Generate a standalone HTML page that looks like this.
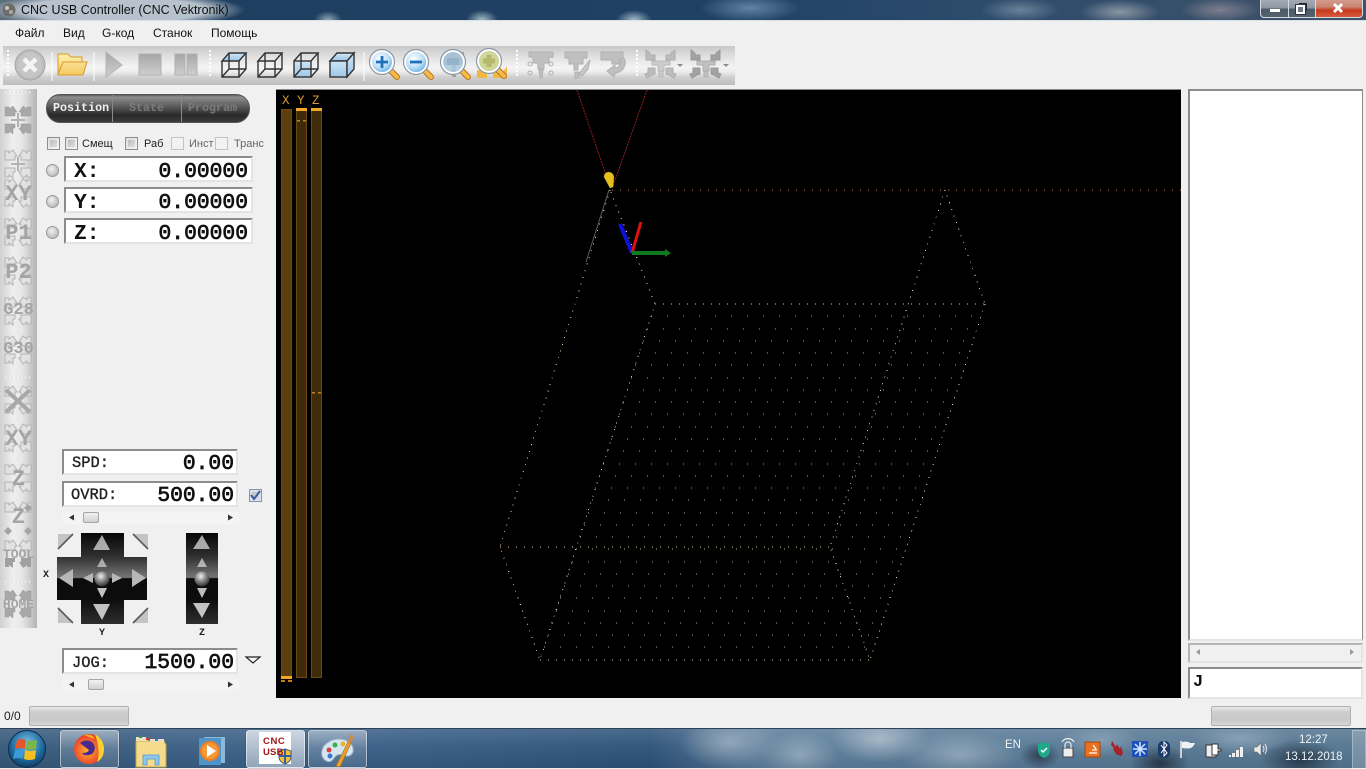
<!DOCTYPE html>
<html><head><meta charset="utf-8"><title>CNC USB Controller</title>
<style>
html,body{margin:0;padding:0;width:1366px;height:768px;overflow:hidden;background:#f0f0f0;font-family:"Liberation Sans","Noto Sans CJK SC",sans-serif}
div{position:absolute;box-sizing:border-box}
span{position:absolute;white-space:nowrap}
.abs{position:absolute;left:0;top:0}
#title{left:0;top:0;width:1366px;height:21px;border-bottom:1px solid #d8e0e8;background:
 radial-gradient(ellipse 130px 18px at 115px 10px,rgba(190,200,210,.95) 70%,rgba(190,200,210,0) 100%),
 radial-gradient(ellipse 14px 9px at 328px 20px,#90a9b6,rgba(144,169,182,0)),
 radial-gradient(ellipse 16px 10px at 482px 20px,#a5bcc4,rgba(165,188,196,0)),
 radial-gradient(ellipse 18px 10px at 634px 20px,#a3bbc6,rgba(163,187,198,0)),
 radial-gradient(ellipse 50px 14px at 750px 8px,#5f83a6,rgba(95,131,166,0)),
 radial-gradient(ellipse 40px 12px at 1020px 10px,#6a8098,rgba(106,128,152,0)),
 radial-gradient(ellipse 40px 12px at 1120px 12px,#8a96a4,rgba(138,150,164,0)),
 radial-gradient(ellipse 40px 12px at 1220px 10px,#7d7f8f,rgba(125,127,143,0)),
 linear-gradient(90deg,#5a6a78 0,#1f3f60 230px,#1f4164 700px,#2e4c6c 1000px,#3f5268 1366px)}
#t{left:21px;top:3px;font-size:12.5px;color:#111}
.m{top:26px;font-size:12px;color:#111}
#tb{left:3px;top:46px;width:732px;height:39px;background:linear-gradient(#c9c9c9 0,#e2e2e2 30%,#f4f4f4 55%,#ededed 66%,#cfcfcf 80%,#bdbdbd 100%)}
#strip{left:0;top:89px;width:37px;height:539px;background:linear-gradient(90deg,#d0d0d0 0,#efefef 35%,#e6e6e6 60%,#b4b4b4 100%)}
.sl{font:bold 22px "Liberation Mono",monospace;color:#a4a4a4;text-align:center;left:0;width:37px}
#pill{left:46px;top:94px;width:204px;height:29px;border-radius:14px;background:linear-gradient(#5e5e5e 0,#8e8e8e 8%,#565656 45%,#2a2a2a 75%,#3c3c3c 100%);border:1px solid #555;overflow:hidden}
#pill i{position:absolute;top:0;bottom:0;width:1px;background:#8a8a8a}
.pt{font:bold 11.7px "Liberation Mono",monospace;top:6px}
.cb{width:13px;height:13px;border:1px solid #8e8f8f;background:linear-gradient(135deg,#dcdcdc,#f6f6f6)}
.cb:after{content:"";position:absolute;left:2px;top:2px;width:7px;height:7px;background:linear-gradient(135deg,#bdbdbd,#dedede)}
.cb.d{border-color:#c4c4c4;background:#f2f2f2}.cb.d:after{display:none}
.lb{font-size:11px;top:138px;color:#222}
.ro{background:#fff;border-top:2px solid #8c8c8c;border-left:2px solid #8c8c8c;border-right:2px solid #e4e4e4;border-bottom:2px solid #e4e4e4;overflow:hidden}
.big{font:normal 21.3px/21px "Liberation Mono",monospace;color:#111;-webkit-text-stroke:.7px #111}
.bl{font-weight:bold;-webkit-text-stroke:0}
.sm{font:normal 15.4px/16px "Liberation Mono",monospace;color:#222;-webkit-text-stroke:.35px #222}
.rd{width:13px;height:13px;border-radius:50%;border:1px solid #999;background:radial-gradient(circle at 40% 35%,#f0f0f0,#c0c0c0 70%,#a8a8a8)}
.sb{background:#f4f4f4;height:12px}
.th{top:0;height:11px;width:16px;border:1px solid #a4a4a4;border-radius:2px;background:linear-gradient(#f2f2f2,#d0d0d0)}
.lt{font:bold 10px "Liberation Mono",monospace;color:#222}
#gl{left:276px;top:89px;width:905px;height:609px;background:#000;border-top:1px solid #8a8a8a}
.ax{font:12.5px "Liberation Mono",monospace;color:#d99b3a;top:94px}
#st{left:4px;top:709px;font-size:12px;color:#222}
.pb{height:20px;border:1px solid #b0b0b0;border-radius:2px;background:linear-gradient(#e8e8e8,#cdcdcd 30%,#c8c8c8 70%,#d8d8d8)}
#task{left:0;top:728px;width:1366px;height:40px;border-top:1px solid #2c4258;background:
 linear-gradient(rgba(255,255,255,.14),rgba(255,255,255,.04) 45%,rgba(0,0,0,.06)),
 radial-gradient(ellipse 50px 26px at 730px 14px,#8ba0b4,rgba(139,160,180,0)),
 radial-gradient(ellipse 40px 24px at 800px 26px,#8fa6b8,rgba(143,166,184,0)),
 radial-gradient(ellipse 50px 24px at 880px 10px,#a0b2c2,rgba(160,178,194,0)),
 radial-gradient(ellipse 60px 24px at 960px 26px,#8ea5b8,rgba(142,165,184,0)),
 radial-gradient(ellipse 20px 14px at 1040px 26px,#2a3c50,rgba(42,60,80,0)),
 radial-gradient(ellipse 40px 16px at 1100px 12px,#7a97ae,rgba(122,151,174,0)),
 radial-gradient(ellipse 30px 18px at 1160px 34px,#25384a,rgba(37,56,74,0)),
 radial-gradient(ellipse 50px 16px at 1240px 10px,#7c98b0,rgba(124,152,176,0)),
 radial-gradient(ellipse 40px 20px at 1300px 30px,#25384a,rgba(37,56,74,0)),
 linear-gradient(90deg,#36587a 0,#3a6088 300px,#2b5178 650px,#5b7d9b 760px,#53748f 1366px)}
.btn{top:1px;height:38px;width:59px;border:1px solid rgba(255,255,255,.55);border-radius:3px;background:linear-gradient(rgba(255,255,255,.42),rgba(255,255,255,.18) 50%,rgba(255,255,255,.1));box-shadow:0 0 1px #123}
.tr{color:#eef3f8;font-size:11.5px}
</style></head><body>

<div id="title">
<svg class="abs" width="20" height="20"><circle cx="9" cy="10" r="6.5" fill="#6d6d6a"/><circle cx="7" cy="8" r="2" fill="#c8c8c0"/><circle cx="11" cy="12" r="2" fill="#a8a8a0"/></svg>
<span id="t">CNC USB Controller (CNC Vektronik)</span>
<div style="left:1260px;top:0;width:103px;height:18px;border:1px solid #d4dbe2;border-top:0;border-radius:0 0 4px 4px;overflow:hidden;background:linear-gradient(#a3aab2,#8e98a3 45%,#4c5a68 55%,#55626f)">
 <div style="left:27px;top:0;width:1px;height:17px;background:#d4dbe2"></div>
 <div style="left:54px;top:0;width:1px;height:17px;background:#d4dbe2"></div>
 <div style="left:55px;top:0;width:47px;height:17px;background:linear-gradient(#d69a8a,#c98472 40%,#c53a1c 60%,#d75a3c)"></div>
 <div style="left:9px;top:9px;width:10px;height:3px;background:#fff"></div>
 <div style="left:38px;top:3px;width:8px;height:8px;border:1px solid #223;background:#e8e8e8"></div>
 <div style="left:35px;top:5px;width:9px;height:9px;border:2px solid #fff;outline:1px solid #334;background:#6b7885"></div>
 <svg class="abs" width="103" height="18"><path d="M73 4l8 8M81 4l-8 8" stroke="#fff" stroke-width="3"/></svg>
</div>
</div>

<span class="m" style="left:15px">Файл</span><span class="m" style="left:63px">Вид</span><span class="m" style="left:102px">G-код</span><span class="m" style="left:153px">Станок</span><span class="m" style="left:211px">Помощь</span>

<div id="tb"></div>
<svg class="abs" width="740" height="90">
<defs>
 <linearGradient id="fb" x1="0" y1="0" x2="0" y2="1"><stop offset="0" stop-color="#cfe6f7"/><stop offset="1" stop-color="#9cc6e8"/></linearGradient>
 <linearGradient id="fo" x1="0" y1="0" x2="0" y2="1"><stop offset="0" stop-color="#fff0b0"/><stop offset="1" stop-color="#f4c860"/></linearGradient>
 <radialGradient id="gl1" cx=".4" cy=".35" r=".7"><stop offset="0" stop-color="#ffffff"/><stop offset=".6" stop-color="#b9dcf6"/><stop offset="1" stop-color="#58a8e4"/></radialGradient>
 <linearGradient id="gs" x1="0" y1="0" x2="0" y2="1"><stop offset="0" stop-color="#a6a6a6"/><stop offset="1" stop-color="#cfcfcf"/></linearGradient>
 <g id="mg"><path d="M9 9L15 15" stroke="#b87a1c" stroke-width="6" stroke-linecap="round"/><path d="M9 9L15 15" stroke="#f6b94a" stroke-width="4" stroke-linecap="round"/></g>
</defs>
<g fill="none" stroke="#fff" stroke-width="1"><path d="M52 52v29M94 52v29M364 52v29"/></g>
<g stroke="#fff" stroke-width="2" stroke-dasharray="2 2"><path d="M8 50v27M210 50v27M517 50v27M637 50v27"/></g>
<circle cx="30" cy="65" r="15" fill="#bdbdbd" stroke="#a6a6a6" stroke-width="1"/><circle cx="30" cy="65" r="12.500" fill="#c6c6c6"/>
<path d="M24 59l12 12M36 59L24 71" stroke="#f4f4f4" stroke-width="4.500"/>
<path d="M58 74V54h10l3 3h11v5h5l-4 13H58z" fill="url(#fo)" stroke="#d49a2a"/><path d="M58 74l5-12h24" fill="none" stroke="#d49a2a"/>
<path d="M106 53l16 13-16 12z" fill="url(#gs)" stroke="#b4b4b4" transform="translate(0 -1)"/>
<rect x="139" y="54" width="22" height="21" fill="url(#gs)" stroke="#b0b0b0"/>
<rect x="175" y="54" width="10" height="21" fill="url(#gs)" stroke="#b0b0b0"/><rect x="187" y="54" width="10" height="21" fill="url(#gs)" stroke="#b0b0b0"/>
<g fill="none" stroke="#333" stroke-width="1.400">
 <path d="M222 61h17l7-8H229z" fill="url(#fb)"/><path d="M222 61v16h17V61M239 77l7-8V53M222 77l7-8h17M229 53v16"/>
 <path d="M258 61h17l7-8h-17zM258 61v16h17V61M275 77l7-8V53M258 77l7-8h17M265 53v16" />
 <rect x="294" y="61" width="17" height="16" fill="url(#fb)"/><path d="M294 61l7-8h17l-7 8M311 77l7-8V53M301 53v16h17M301 69l-7 8"/>
 <path d="M330 61h17l7-8h-17z" fill="url(#fb)"/><rect x="330" y="61" width="17" height="16" fill="url(#fb)"/><path d="M347 77l7-8V53l-7 8z" fill="url(#fb)"/>
</g>
<g transform="translate(382 62)"><use href="#mg"/><circle r="11" fill="url(#gl1)" stroke="#fff" stroke-width="2"/><circle r="12.500" fill="none" stroke="#8c98a4" stroke-width="1.200"/><path d="M-6 0h12M0-6v12" stroke="#1e70b8" stroke-width="2.800"/></g>
<g transform="translate(416 62)"><use href="#mg"/><circle r="11" fill="url(#gl1)" stroke="#fff" stroke-width="2"/><circle r="12.500" fill="none" stroke="#8c98a4" stroke-width="1.200"/><path d="M-6 0h12" stroke="#1e70b8" stroke-width="2.800"/></g>
<path d="M444 52h20v13h-20zM452 65h4v12h-4z" fill="#a4a4a4"/>
<g transform="translate(453 62)"><use href="#mg"/><circle r="11" fill="#a8c8de" fill-opacity=".85" stroke="#fff" stroke-width="2"/><circle r="12.500" fill="none" stroke="#8c98a4" stroke-width="1.200"/><path d="M-6-4h12v7H-6z" fill="#96b4c8"/></g>
<path d="M477 78v-8h10v8zM493 78v-6h10l4-6 0 12z" fill="#f4b840"/>
<g transform="translate(489 61)"><use href="#mg"/><circle r="11" fill="#cfd69a" stroke="#fff" stroke-width="2"/><circle r="12.500" fill="none" stroke="#8c98a4" stroke-width="1.200"/><path d="M-6 0h12M0-6v12" stroke="#b5b86a" stroke-width="5"/></g>
<g fill="#c0c0c0" stroke="#b0b0b0">
 <path d="M529 52h24v5h-4v6h-5v6h-6v-6h-5v-6h-4z M539 70h4l-1 8h-2z"/>
 <circle cx="530" cy="64" r="2" fill="none"/><circle cx="551" cy="64" r="2" fill="none"/><circle cx="530" cy="73" r="2" fill="none"/><circle cx="551" cy="73" r="2" fill="none"/>
 <path d="M565 52h22v6h-4v6h-5v6h-4v-6h-5v-6h-4z M575 72h4v6h-4z"/>
 <path d="M590 60l-5 6-6 8 3 2 6-7z" fill="#c8c8c8"/>
 <path d="M601 52h22v8h-4v4h-7v-4h-11z"/><path d="M624 58c3 4 1 14-9 15l-1 4-7-6 8-6v3c4 0 6-3 5-9z"/>
</g>
<g fill="#bcbcbc" stroke="#aeaeae">
 <path d="M646 50l4 3v2h5v5h-9zM675 50l-4 3v2h-5v5h9zM647 78l-2-4 3-1v-5h7v6l-3 1zM674 78l2-4-3-1v-5h-7v6l3 1z"/>
 <path d="M652 61h18v4h-6v6h-6v-6h-6zM659 71h4v6h-4z" fill="#cccccc" stroke="#b8b8b8"/>
</g>
<g fill="#a2a2a2" stroke="#989898" >
 <path d="M691 50l4 3v2h5v5h-9zM720 50l-4 3v2h-5v5h9zM692 78l-2-4 3-1v-5h7v6l-3 1zM719 78l2-4-3-1v-5h-7v6l3 1z"/>
 <path d="M697 61h18v4h-6v6h-6v-6h-6zM704 71h4v6h-4z" fill="#c0c0c0" stroke="#aeaeae"/>
</g>
<path d="M677 64h6l-3 3zM723 64h6l-3 3z" fill="#8e8e8e"/>
</svg>

<div id="strip"></div>
<svg class="abs" width="37" height="640">
<defs>
 <g id="af"><path d="M5-14l4 3v-2h4v9H3V-8H1zM-5-14l-4 3v-2h-4v9h10V-8h2zM5 14l4-3v2h4V4H3v4H1zM-5 14l-4-3v2h-4V4H-3v4h-2z" fill="#a8a8a8" stroke="#9a9a9a" stroke-width=".5"/></g>
 <g id="ao"><path d="M5-14l4 3v-2h4v9H3V-8H1zM-5-14l-4 3v-2h-4v9h10V-8h2zM5 14l4-3v2h4V4H3v4H1zM-5 14l-4-3v2h-4V4H-3v4h-2z" fill="#e2e2e2" stroke="#b4b4b4"/></g>
</defs>
<path d="M4 92.500h28M4 377.500h28M4 581.500h28" stroke="#fff" stroke-width="1.500" stroke-dasharray="2 2"/>
<path d="M4 92.500h28M4 377.500h28M4 581.500h28" stroke="#999" stroke-width=".6" stroke-dasharray="1 3"/>
<use href="#af" x="18" y="120"/><path d="M18 113v14M11 120h14" stroke="#b4b4b4" stroke-width="2"/>
<use href="#ao" x="18" y="164"/><path d="M18 157v14M11 164h14" stroke="#b4b4b4" stroke-width="2"/>
<use href="#ao" x="18" y="193"/><use href="#ao" x="18" y="232"/><use href="#ao" x="18" y="271"/><use href="#ao" x="18" y="311"/><use href="#ao" x="18" y="350"/>
<use href="#ao" x="18" y="400"/><path d="M6 390l24 22M30 390L6 412" stroke="#a8a8a8" stroke-width="4"/>
<use href="#ao" x="18" y="438"/><use href="#ao" x="18" y="478"/>
<path d="M5-14l4 3v-2h4v9H3V-8H1zM-5-14l-4 3v-2h-4v9h10V-8h2z" transform="translate(18 516)" fill="#e2e2e2" stroke="#b4b4b4"/>
<path d="M8 527l4 4-4 4-4-4zM28 527l4 4-4 4-4-4zM28 504l4 4-4 4-4-4z" fill="#a4a4a4"/>
<path d="M5-14l4 3v-2h4v9H3V-8H1zM-5-14l-4 3v-2h-4v9h10V-8h2z" transform="translate(18 554)" fill="#e2e2e2" stroke="#b4b4b4"/>
<path d="M5 14l4-3v2h4V4H3v4H1zM-5 14l-4-3v2h-4V4H-3v4h-2z" transform="translate(18 554)" fill="#a0a0a0"/>
<use href="#af" x="18" y="604"/>
</svg>
<span class="sl" style="top:182px">XY</span><span class="sl" style="top:221px">P1</span><span class="sl" style="top:260px">P2</span>
<span class="sl" style="top:301px;font-size:17px">G28</span><span class="sl" style="top:340px;font-size:17px">G30</span>
<span class="sl" style="top:427px">XY</span><span class="sl" style="top:467px">Z</span><span class="sl" style="top:505px">Z</span>
<span class="sl" style="top:547px;font-size:13px">TOOL</span><span class="sl" style="top:597px;font-size:13px">HOME</span>

<div id="pill"><i style="left:65px"></i><i style="left:134px"></i>
<span class="pt" style="left:6px;color:#f0f0f0">Position</span><span class="pt" style="left:82px;color:#7a7a7a">State</span><span class="pt" style="left:141px;color:#7a7a7a">Program</span></div>

<div class="cb" style="left:47px;top:137px"></div><div class="cb" style="left:65px;top:137px"></div><span class="lb" style="left:82px">Смещ</span>
<div class="cb" style="left:125px;top:137px"></div><span class="lb" style="left:144px">Раб</span>
<div class="cb d" style="left:171px;top:137px"></div><span class="lb" style="left:189px;color:#666">Инст</span>
<div class="cb d" style="left:215px;top:137px"></div><span class="lb" style="left:234px;color:#666">Транс</span>

<div class="rd" style="left:46px;top:164px"></div><div class="rd" style="left:46px;top:195px"></div><div class="rd" style="left:46px;top:226px"></div>
<div class="ro big" style="left:64px;top:156px;width:189px;height:26px"><span class="bl" style="left:8px;top:4px">X:</span><span style="right:3px;top:4px">0.00000</span></div>
<div class="ro big" style="left:64px;top:187px;width:189px;height:26px"><span class="bl" style="left:8px;top:4px">Y:</span><span style="right:3px;top:4px">0.00000</span></div>
<div class="ro big" style="left:64px;top:218px;width:189px;height:26px"><span class="bl" style="left:8px;top:4px">Z:</span><span style="right:3px;top:4px">0.00000</span></div>

<div class="ro" style="left:62px;top:449px;width:176px;height:26px"><span class="sm" style="left:8px;top:4px">SPD:</span><span class="big" style="right:2px;top:3px">0.00</span></div>
<div class="ro" style="left:62px;top:481px;width:176px;height:26px"><span class="sm" style="left:7px;top:4px">OVRD:</span><span class="big" style="right:2px;top:3px">500.00</span></div>
<div class="cb" style="left:249px;top:489px;background:#d8e2f0;border-color:#8a94a4"></div>
<div class="sb" style="left:63px;top:512px;width:176px"><div class="th" style="left:20px"></div></div>
<div class="sb" style="left:63px;top:679px;width:176px"><div class="th" style="left:25px"></div></div>
<svg class="abs" width="270" height="700">
<path d="M251 495l3 4 6-8" fill="none" stroke="#3a5a9c" stroke-width="2"/>
<defs>
 <linearGradient id="dp" gradientUnits="userSpaceOnUse" x1="0" y1="533" x2="0" y2="624"><stop offset="0" stop-color="#060606"/><stop offset=".26" stop-color="#303030"/><stop offset=".49" stop-color="#767676"/><stop offset=".5" stop-color="#0c0c0c"/><stop offset=".72" stop-color="#0c0c0c"/><stop offset="1" stop-color="#2e2e2e"/></linearGradient>
 <radialGradient id="ball" cx=".42" cy=".32" r=".75"><stop offset="0" stop-color="#f0f0f0"/><stop offset=".45" stop-color="#8a8a8a"/><stop offset="1" stop-color="#1c1c1c"/></radialGradient>
 <linearGradient id="ar" x1="0" y1="0" x2="0" y2="1"><stop offset="0" stop-color="#a8a6a6"/><stop offset="1" stop-color="#c8c6c6"/></linearGradient>
</defs>
<path d="M81 533h43v24h23v43h-23v24H81v-24H57v-43h24z" fill="url(#dp)"/>
<rect x="186" y="533" width="32" height="91" fill="url(#dp)"/>
<g fill="url(#ar)">
 <path d="M102 535l-9 15h17zM102 620l-9-16h17zM59 578l14-9v18zM146 578l-14-9v18z" />
 <path d="M102 558l-5 9h10zM102 598l-5-10h10zM83 578l10-5v10zM122 578l-10-5v10z"/>
 <path d="M202 535l-9 14h17zM202 618l-9-15h17zM202 558l-5 9h10zM202 598l-5-10h10z"/>
</g>
<circle cx="102" cy="579" r="7.500" fill="url(#ball)"/><circle cx="202" cy="579" r="7.500" fill="url(#ball)"/>
<g fill="#c4c4c4">
 <path d="M58 534h15L58 549z"/><path d="M148 534h-15l15 15z"/><path d="M58 623h15l-15-15z"/><path d="M148 623h-15l15-15z"/>
</g>
<path d="M73 534L58 549M133 534l15 15M58 608l15 15M148 608l-15 15" fill="none" stroke="#5a5a5a" stroke-width="1.600"/>
<path d="M246 657h14l-7 6z" fill="#f4f4f4" stroke="#222" stroke-width="1.200"/>
<g fill="#333"><path d="M74 514.500l-5 3 5 3zM228 514.500l5 3-5 3zM74 681.500l-5 3 5 3zM228 681.500l5 3-5 3z"/></g>
</svg>
<span class="lt" style="left:43px;top:570px">X</span><span class="lt" style="left:99px;top:628px">Y</span><span class="lt" style="left:199px;top:628px">Z</span>
<div class="ro" style="left:62px;top:648px;width:176px;height:26px"><span class="sm" style="left:8px;top:5px">JOG:</span><span class="big" style="right:2px;top:3px">1500.00</span></div>

<div id="gl"></div>
<span class="ax" style="left:282px">X</span><span class="ax" style="left:297px">Y</span><span class="ax" style="left:312px">Z</span>
<svg class="abs" width="1182" height="700">
<g fill="#3f2b08" stroke="#6a4a18" stroke-width="1">
 <rect x="281.500" y="109.500" width="10" height="567" fill="#5c3f0c"/>
 <rect x="296.500" y="109.500" width="10" height="568"/>
 <rect x="311.500" y="109.500" width="10" height="568"/>
</g>
<g fill="#f5a623">
 <rect x="296" y="108" width="11" height="3"/><rect x="311" y="108" width="11" height="3"/><rect x="281" y="676" width="11" height="3"/>
</g>
<g fill="#c08020">
 <rect x="297" y="120" width="3" height="1.500"/><rect x="303" y="120" width="3" height="1.500"/>
 <rect x="312" y="392" width="3" height="1.500"/><rect x="318" y="392" width="3" height="1.500"/>
 <rect x="281" y="680" width="4" height="2"/><rect x="288" y="680" width="4" height="2"/>
</g>
<g shape-rendering="crispEdges" fill="none">
<path stroke="#a4a498" stroke-dasharray="1 15" d="M651 316h330M647 329h330M643 341h330M639 353h330M635 365h330M631 378h330M627 390h330M623 402h330M619 414h330M615 427h330M611 439h330M607 451h330M603 464h330M599 476h330M595 488h330M592 500h330M588 513h330M584 525h330M580 537h330M576 549h330M572 562h330M568 574h330M564 586h330M560 598h330M556 611h330M552 623h330M548 635h330M544 647h330"/>
<path stroke="#e0c49c" stroke-dasharray="1 7" d="M655 304h330M540 660h330M500 547h330"/>
<path stroke="#c8785a" stroke-dasharray="1 7" d="M612 190h569"/>
<path stroke="#e8cca8" stroke-dasharray="1 6" d="M610 190L500 547L540 660L655 304L610 190M985 304L870 660L830 547L945 190L985 304"/>
</g>
<path d="M577 90l32 94M647 90l-34 96" fill="none" stroke="#8f2020" stroke-width="1" stroke-dasharray="2 1"/>
<path d="M609 190l-23 72" stroke="#5c5c5c" stroke-width="1"/>
<path d="M604 177q0-4 4-5q5 0 6 5l-1 10-3 1z" fill="#e3c020" stroke="#a88f20" stroke-width=".5"/>
<path d="M632 253l-12-29" stroke="#1010d8" stroke-width="4"/>
<path d="M632 253l9-31" stroke="#e01010" stroke-width="3"/>
<path d="M632 253h33" stroke="#0f7a1e" stroke-width="4"/><path d="M665 249l6 4-6 4z" fill="#0f7a1e"/>
</svg>

<div class="ro" style="left:1188px;top:89px;width:175px;height:552px;border-right:1px solid #8c8c8c"></div>
<div style="left:1188px;top:643px;width:175px;height:20px;background:#f0f0f0;border:2px solid #b4b4b4;border-right-color:#e4e4e4;border-bottom-color:#e4e4e4"></div>
<svg class="abs" width="1366" height="670"><path d="M1200 649l-4 3 4 3zM1350 649l4 3-4 3z" fill="#999"/></svg>
<div class="ro" style="left:1188px;top:667px;width:175px;height:32px"><span style="left:3px;top:5px;font:bold 17px/18px 'Liberation Mono',monospace;color:#111">J</span></div>

<span id="st">0/0</span>
<div class="pb" style="left:29px;top:706px;width:100px"></div>
<div class="pb" style="left:1211px;top:706px;width:140px"></div>

<div id="task">
 <div class="btn" style="left:60px"></div>
 <div class="btn" style="left:246px;background:linear-gradient(rgba(255,255,255,.7),rgba(255,255,255,.45))"></div>
 <div class="btn" style="left:308px"></div>
 <div style="left:1352px;top:1px;width:14px;height:39px;border:1px solid rgba(255,255,255,.3);background:rgba(255,255,255,.2)"></div>
 <span class="tr" style="left:1005px;top:10px">EN</span>
 <span class="tr" style="left:1299px;top:5px">12:27</span>
 <span class="tr" style="left:1285px;top:22px">13.12.2018</span>
 <svg class="abs" width="1366" height="40">
  <defs><radialGradient id="orb" cx=".5" cy=".35" r=".7"><stop offset="0" stop-color="#7fc4e8"/><stop offset=".6" stop-color="#1f6ca0"/><stop offset="1" stop-color="#0b3356"/></radialGradient>
  <radialGradient id="ff" cx=".45" cy=".55" r=".55"><stop offset="0" stop-color="#ffb030"/><stop offset="1" stop-color="#e8382a"/></radialGradient></defs>
  <circle cx="27" cy="20" r="18.500" fill="url(#orb)" stroke="#0e2c48"/>
  <path d="M17 11q5-2 9 0l-1 9q-4-2-10 0z" fill="#e4572e"/><path d="M27 11q4 2 10 0l-1 9q-6 2-10 0z" fill="#7ab648"/><path d="M15 21q5-2 9 0l-1 9q-4-2-10 0z" fill="#3c9ad8"/><path d="M25 21q5 2 11 0l-1 9q-6 2-11 0z" fill="#f4c020"/>
  <circle cx="89" cy="20" r="15" fill="url(#ff)"/><path d="M95 5q9 6 9 15 0 9-7 13 4-10-2-28z" fill="#fdd030"/><path d="M80 14q7-5 13 0 4 6-1 11-7 3-10-1 6 0 7-3-4-3-9-7z" fill="#4a2a90"/><path d="M84 6q8-2 11 4-6-2-11-4z" fill="#fdb020"/>
  <path d="M136 12h28l2 4v22h-30z" fill="#f5dc8c" stroke="#c8a848"/><path d="M136 8h10l2 4h-12zM150 10h14v3h-14z" fill="#e8e0c0"/><rect x="139" y="7" width="3" height="2" fill="#2a9a3a"/><rect x="146" y="9" width="3" height="2" fill="#d83030"/><rect x="155" y="10" width="3" height="2" fill="#3080d8"/>
  <path d="M143 26h16v10h-4v-6h-8v6h-4z" fill="#8cc8ec" stroke="#5a98c4" stroke-width=".8"/>
  <path d="M204 8h21v26h-21z" fill="#8eb8d8"/><path d="M199 9h22v27h-22z" fill="#4f94c8"/><circle cx="210" cy="22" r="10" fill="#ee7f20"/><circle cx="210" cy="22" r="8" fill="#f59a3a"/><path d="M207 16l9 6-9 6z" fill="#fff"/>
  <rect x="259" y="3" width="32" height="32" fill="#fff"/>
  <path d="M279 22l6-2 6 2v7q-1 4-6 6-5-2-6-6z" fill="#fbc02d" stroke="#3a5a8a"/><path d="M285 20v15M279 27h12" stroke="#2a60a8" stroke-width="2"/>
  <path d="M324 17q8-9 21-6 9 4 8 12-3 6-10 3-6-2-9 3-4 6-9 2-6-5-1-14z" fill="#d6e6f0" stroke="#a8bccc"/>
  <circle cx="329" cy="21" r="2.500" fill="#d84040"/><circle cx="335" cy="16" r="2.500" fill="#3cb050"/><circle cx="330" cy="27" r="2.500" fill="#3878d0"/><circle cx="343" cy="15" r="2.500" fill="#f0b030"/>
  <path d="M336 37l12-24 3 1-11 24z" fill="#e8a030" stroke="#a06818" stroke-width=".6"/><path d="M347 13l4-8 3 3-3 6z" fill="#c88a50"/>
  <path d="M1044 13l6 2v6q0 6-6 8-6-2-6-8v-6z" fill="#1fa88a"/><path d="M1041 21l2 2 4-4" fill="none" stroke="#fff" stroke-width="1.500"/>
  <rect x="1063" y="19" width="10" height="9" fill="#eee" stroke="#444"/><path d="M1065 19v-3a3 3 0 016 0v3M1062 13a7 7 0 0112 0" fill="none" stroke="#eee" stroke-width="1.200"/>
  <rect x="1085" y="13" width="15" height="15" fill="#e8701e" stroke="#a84810"/><path d="M1089 24h8M1092 21h5M1093 16l3 4" stroke="#fff" stroke-width="1.300"/>
  <path d="M1112 12l4 6 1-3 3 5 1-3 2 7-2 3-5-2-3-5 1-1-3-3z" fill="#a52228"/>
  <rect x="1132" y="12" width="16" height="16" fill="#1f4fb8"/><path d="M1140 13v14M1133 20h14M1135 15l10 10M1145 15l-10 10" stroke="#cfe8ff" stroke-width="1.500"/>
  <rect x="1158" y="12" width="12" height="17" rx="5" fill="#1a3a6c"/><path d="M1161 16l6 8-3 3v-14l3 3-6 8" fill="none" stroke="#fff"/>
  <path d="M1181 12v17" stroke="#f0f0f0" stroke-width="1.500"/><path d="M1182 13q6-1 8 1h5q-1 3-4 5-4 1-9 0z" fill="#eef2f4"/>
  <path d="M1206 16h10v12h-10z" fill="#eee" stroke="#333"/><path d="M1212 15h6v5h3v2h-3v4h-6z" fill="#fff" stroke="#333"/>
  <path d="M1229 26h2v2h-2zM1232 24h3v4h-3zM1236 21h3v7h-3zM1240 18h3v10h-3z" fill="#f0f0f0"/>
  <path d="M1254 18h3l4-4v13l-4-4h-3z" fill="#e8e8e8" stroke="#555" stroke-width=".5"/><path d="M1263 17q2 3 0 6M1265 15q3 5 0 10" fill="none" stroke="#e8e8e8"/>
 </svg>
 <span style="left:263px;top:7px;font:bold 9.500px 'Liberation Sans',sans-serif;color:#a01818;letter-spacing:.6px">CNC</span>
 <span style="left:263px;top:18px;font:bold 9.500px 'Liberation Sans',sans-serif;color:#a01818;letter-spacing:.2px">USB</span>
</div>
</body></html>
